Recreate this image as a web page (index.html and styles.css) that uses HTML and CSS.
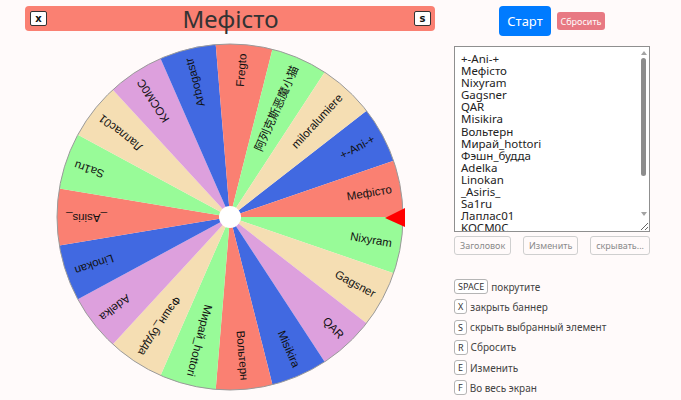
FILE: index.html
```html
<!DOCTYPE html>
<html lang="ru">
<head>
<meta charset="utf-8">
<title>Колесо имён</title>
<link rel="stylesheet" href="styles.css">
</head>
<body>
<div class="page">
  <section class="stage">
    <header class="banner">
      <kbd class="banner-key">x</kbd>
      <h1 class="banner-title">Мефісто</h1>
      <kbd class="banner-key">s</kbd>
    </header>
    <svg id="wheel" class="wheel" width="350" height="350" viewBox="-175 -175 350 350"></svg>
  </section>
  <aside class="panel">
    <div class="actions">
      <button class="btn btn-start" type="button">Старт</button>
      <button class="btn btn-reset" type="button" disabled>Сбросить</button>
    </div>
    <div class="names-box">
      <textarea class="names" spellcheck="false">+-Ani-+
Мефісто
Nixyram
Gagsner
QAR
Misikira
Вольтерн
Мирай_hottori
Фэшн_будда
Adelka
Linokan
_Asiris_
Sa1ru
Лаплас01
KOCM0C
Arbogastr
Fregto
阿列克斯恶魔小猫
miloralumiere</textarea>
      <div class="scrollbar" aria-hidden="true">
        <span class="scroll-arrow scroll-up"></span>
        <span class="scroll-thumb"></span>
        <span class="scroll-arrow scroll-down"></span>
      </div>
    </div>
    <div class="tools">
      <button class="btn-tool" type="button" disabled>Заголовок</button>
      <button class="btn-tool" type="button" disabled>Изменить</button>
      <button class="btn-tool" type="button" disabled>скрывать...</button>
    </div>
    <ul class="shortcuts">
      <li><kbd class="key">SPACE</kbd><span>покрутите</span></li>
      <li><kbd class="key">X</kbd><span>закрыть баннер</span></li>
      <li><kbd class="key">S</kbd><span>скрыть выбранный элемент</span></li>
      <li><kbd class="key">R</kbd><span>Сбросить</span></li>
      <li><kbd class="key">E</kbd><span>Изменить</span></li>
      <li><kbd class="key">F</kbd><span>Во весь экран</span></li>
    </ul>
  </aside>
</div>
<script src="script.js"></script>
</body>
</html>
```

FILE: styles.css
```css
html, body {
  margin: 0;
  padding: 0;
}

body {
  background: #fffafa;
  font-family: "Noto Sans", "Open Sans", sans-serif;
  color: #333;
}

.page {
  display: flex;
  align-items: flex-start;
}

/* left side: banner + wheel */
.stage {
  width: 454px;
  flex: none;
  padding-top: 6px;
}

.banner {
  box-sizing: border-box;
  width: 410px;
  height: 25px;
  margin-left: 25px;
  padding: 0 4px 0 5px;
  background: #fa8072;
  border-radius: 4px;
  display: flex;
  align-items: center;
  justify-content: space-between;
}

.banner-key {
  box-sizing: border-box;
  width: 17px;
  height: 15px;
  background: #fff;
  border: 1px solid #333;
  border-radius: 2px;
  font: bold 10px/13px "DejaVu Sans", sans-serif;
  color: #111;
  text-align: center;
}

.banner-title {
  margin: 0;
  font-size: 24px;
  line-height: 25px;
  font-weight: 400;
  color: #333;
}

.wheel {
  display: block;
  margin: 11px 0 0 55px;
}

.seg-label {
  font: 11.5px "Liberation Sans", "Noto Sans CJK SC", sans-serif;
  fill: #111;
}

.wheel-rim {
  fill: none;
  stroke: #9a9a9a;
  stroke-width: 1;
}

.wheel-hub {
  fill: #fff;
}

.wheel-pointer {
  fill: #ff0000;
}

/* right side: controls */
.panel {
  width: 196px;
  flex: none;
  padding-top: 6px;
}

.actions {
  height: 30px;
  display: flex;
  align-items: center;
  justify-content: center;
  gap: 6px;
}

.btn {
  font-family: inherit;
  border: 0;
  color: #fff;
  padding: 0;
}

.btn-start {
  width: 52px;
  height: 30px;
  border-radius: 4px;
  background: #007bff;
  font-size: 13px;
}

.btn-reset {
  width: 48px;
  height: 18px;
  border-radius: 3px;
  background: #dc3545;
  opacity: 0.65;
  font-size: 9px;
}

.names-box {
  position: relative;
  width: 196px;
  height: 186px;
  margin-top: 10px;
}

.names {
  display: block;
  box-sizing: border-box;
  width: 196px;
  height: 186px;
  margin: 0;
  padding: 6px 12px 0 6px;
  border: 1px solid #8f8f8f;
  background: #fff;
  font: 11.5px/12.1px "Noto Sans", "Noto Sans CJK SC", sans-serif;
  color: #222;
  resize: both;
  overflow: hidden;
  white-space: pre;
}

/* classic scrollbar drawn over the right edge of the list */
.scrollbar {
  position: absolute;
  top: 1px;
  right: 1px;
  width: 11px;
  height: 172px;
  background: #fff;
  display: flex;
  flex-direction: column;
  align-items: center;
}

.scroll-arrow {
  width: 0;
  height: 0;
  border-left: 3.5px solid transparent;
  border-right: 3.5px solid transparent;
}

.scroll-up {
  margin-top: 4px;
  border-bottom: 4px solid #a3a3a3;
}

.scroll-thumb {
  width: 5px;
  height: 118px;
  margin-top: 3px;
  margin-left: -1px;
  background: #8c8c8c;
  border-radius: 3px;
}

.scroll-down {
  margin-top: auto;
  margin-bottom: 3px;
  border-top: 4px solid #a3a3a3;
}

.tools {
  margin-top: 4px;
  display: flex;
  justify-content: space-between;
}

.btn-tool {
  box-sizing: border-box;
  height: 19px;
  padding: 0 5px;
  background: transparent;
  border: 1px solid #cfcfcf;
  border-radius: 3px;
  font: 9px "Noto Sans", sans-serif;
  color: #8a8a8a;
}

.shortcuts {
  list-style: none;
  margin: 24px 0 0;
  padding: 0;
  display: flex;
  flex-direction: column;
  gap: 5.3px;
}

.shortcuts li {
  height: 15px;
  display: flex;
  align-items: center;
  gap: 3px;
  font-size: 10px;
  color: #444;
}

.key {
  box-sizing: border-box;
  min-width: 12px;
  height: 15px;
  padding: 0 3px;
  border: 1px solid #b5b5b5;
  border-radius: 3px;
  background: #fff;
  font: 9px/13px "Noto Sans", sans-serif;
  color: #333;
  text-align: center;
}
```

FILE: script.js
```js
// Builds the name wheel as SVG slices with labels along each radius.
(function () {
  var names = [
    "+-Ani-+", "Мефісто", "Nixyram", "Gagsner", "QAR", "Misikira",
    "Вольтерн", "Мирай_hottori", "Фэшн_будда", "Adelka", "Linokan",
    "_Asiris_", "Sa1ru", "Лаплас01", "KOCM0C", "Arbogastr", "Fregto",
    "阿列克斯恶魔小猫", "miloralumiere"
  ];
  var colors = ["#4169e1", "#fa8072", "#98fb98", "#f5deb3", "#dda0dd"];
  var NS = "http://www.w3.org/2000/svg";
  var svg = document.getElementById("wheel");
  var R = 173;
  var step = (Math.PI * 2) / names.length;
  var start = -2 * step;

  function el(tag, attrs) {
    var node = document.createElementNS(NS, tag);
    for (var k in attrs) node.setAttribute(k, attrs[k]);
    return node;
  }

  names.forEach(function (name, i) {
    var a0 = start + i * step;
    var a1 = a0 + step;
    var d = "M0 0L" + (R * Math.cos(a0)).toFixed(3) + " " + (R * Math.sin(a0)).toFixed(3) +
      "A" + R + " " + R + " 0 0 1 " + (R * Math.cos(a1)).toFixed(3) + " " + (R * Math.sin(a1)).toFixed(3) + "Z";
    svg.appendChild(el("path", { d: d, fill: colors[i % colors.length] }));
  });

  names.forEach(function (name, i) {
    var mid = start + (i + 0.5) * step;
    var deg = (mid * 180) / Math.PI;
    var t = el("text", {
      "class": "seg-label",
      x: R - 9,
      y: 0,
      "text-anchor": "end",
      "dominant-baseline": "middle",
      transform: "rotate(" + deg.toFixed(3) + ")"
    });
    t.textContent = name;
    svg.appendChild(t);
  });

  svg.appendChild(el("circle", { "class": "wheel-rim", cx: 0, cy: 0, r: R }));
  svg.appendChild(el("circle", { "class": "wheel-hub", cx: 0, cy: 0, r: 11 }));
  svg.appendChild(el("polygon", { "class": "wheel-pointer", points: "155,1 175,-9 175,10" }));
})();
```
